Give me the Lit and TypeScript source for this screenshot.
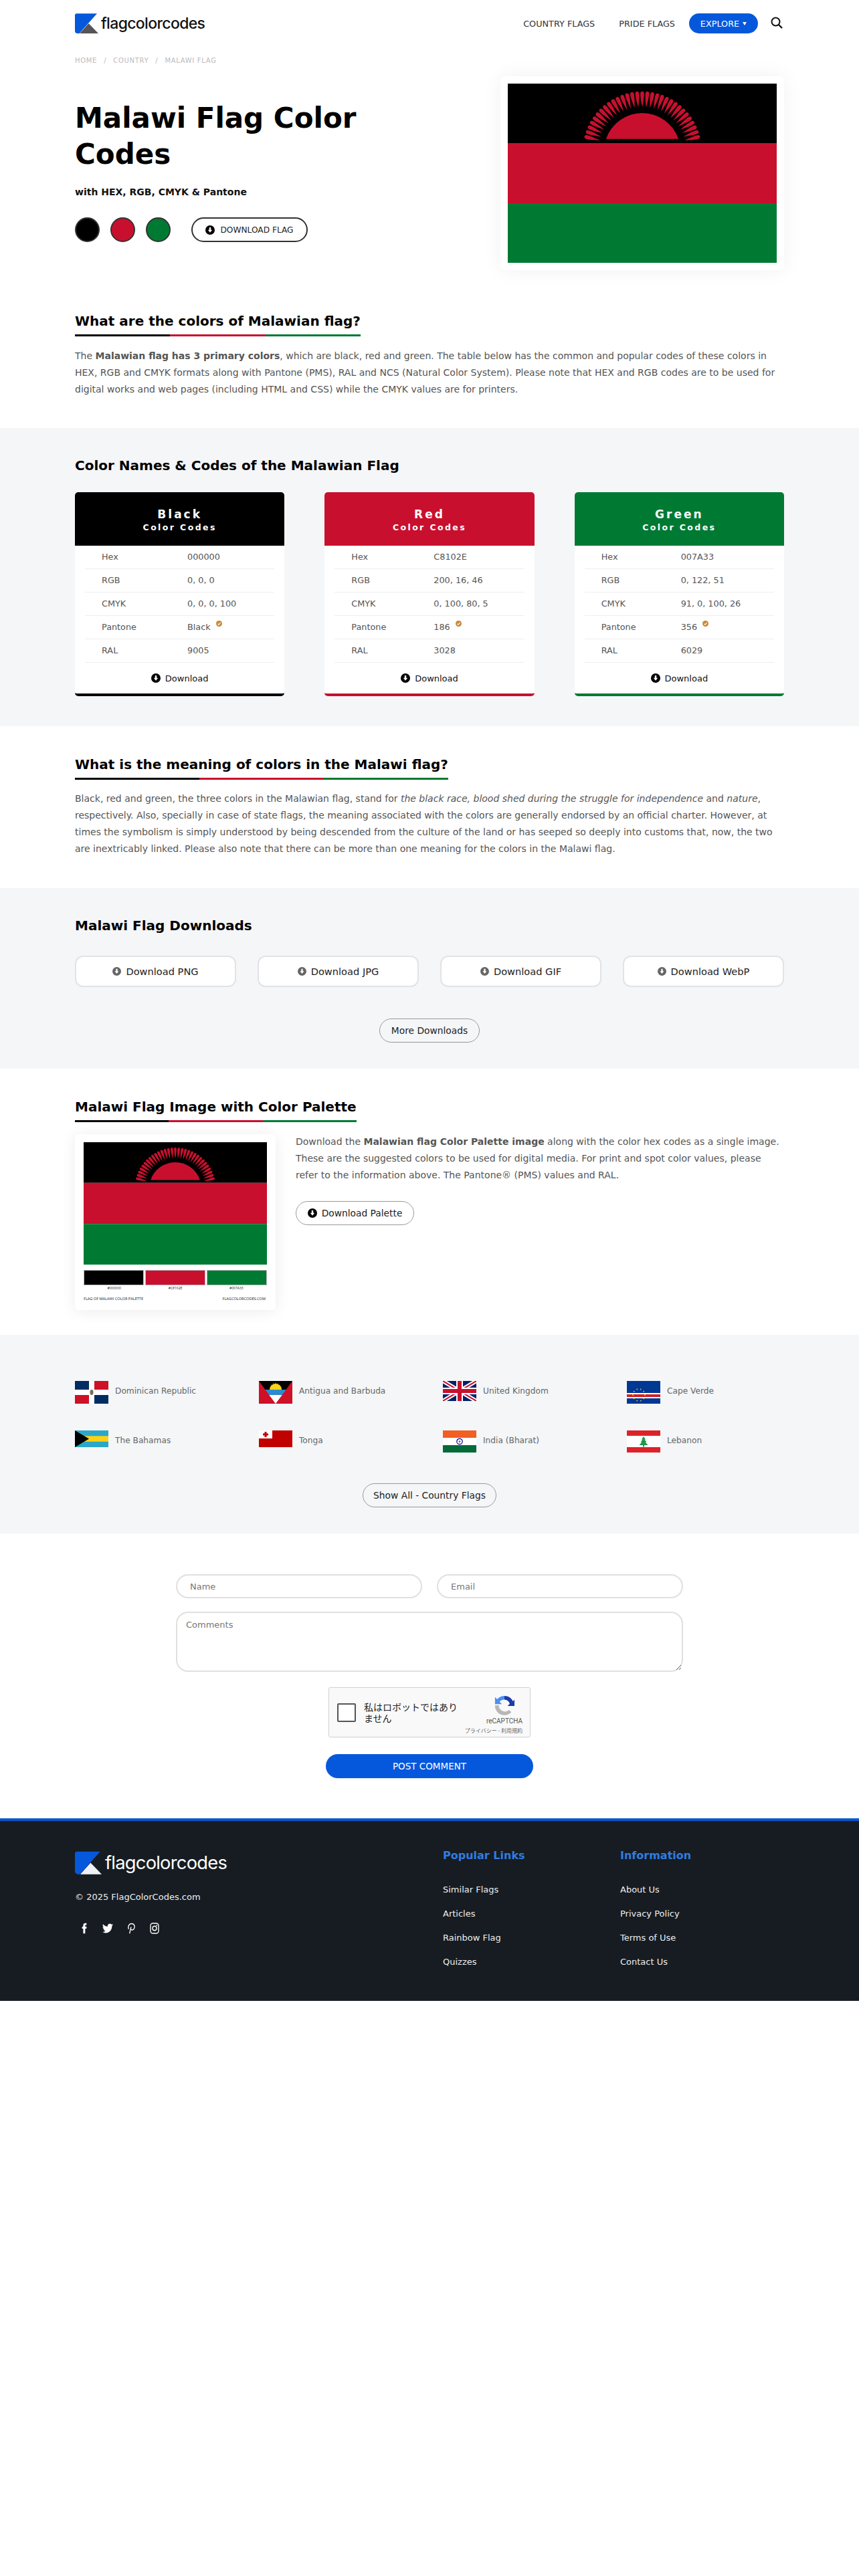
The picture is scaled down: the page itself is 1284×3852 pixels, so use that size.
import { LitElement, html, svg, css } from 'lit';
import { customElement } from 'lit/decorators.js';

const BLACK = '#000000';
const RED = '#C8102E';
const GREEN = '#007A33';

const colors = [
  { name: 'Black', bg: BLACK, hex: '000000', rgb: '0, 0, 0', cmyk: '0, 0, 0, 100', pantone: 'Black', ral: '9005', col: 128 },
  { name: 'Red', bg: RED, hex: 'C8102E', rgb: '200, 16, 46', cmyk: '0, 100, 80, 5', pantone: '186', ral: '3028', col: 123 },
  { name: 'Green', bg: GREEN, hex: '007A33', rgb: '0, 122, 51', cmyk: '91, 0, 100, 26', pantone: '356', ral: '6029', col: 119 },
];

// 31 rays around the rising sun
const rays = Array.from({ length: 31 }, (_, i) => 14 + i * (152 / 30));

const malawiFlag = (cls: string) => html`
  <svg class=${cls} viewBox="0 0 402 268" preserveAspectRatio="none">
    <rect width="402" height="89" fill="#000" />
    <rect y="89" width="402" height="90" fill=${RED} />
    <rect y="179" width="402" height="89" fill=${GREEN} />
    <path d="M147 82.7A57 57 0 0 1 255 82.7Z" fill=${RED} />
    ${rays.map(
      (a) => svg`<path transform="translate(201 100.6) rotate(${a - 90})"
        d="M0-65C-1.2-72-3.2-81-2.8-86.5A2.9 3.6 0 0 1 2.8-86.5C3.2-81 1.2-72 0-65Z" fill=${RED} />`,
    )}
  </svg>
`;

const downIcon = (cls = 'dl') => html`
  <svg class=${cls} viewBox="0 0 16 16">
    <circle cx="8" cy="8" r="8" fill="currentColor" />
    <path d="M6.6 3.5h2.8v4.3h2.3L8 12.4 4.3 7.8h2.3z" fill="#fff" />
  </svg>
`;

const logo = (tri: string) => html`
  <svg viewBox="0 0 35 30">
    <path d="M2.5.3H33L6.5 30H4a4 4 0 0 1-4-4V2.8A2.5 2.5 0 0 1 2.5.3z" fill="#0558dc" />
    <path d="M7 30L20.5 15 35 30z" fill=${tri} />
  </svg>
`;

const flags = [
  {
    name: 'Dominican Republic',
    h: 34,
    art: svg`<rect width="50" height="34" fill="#fff" />
      <rect width="21" height="13" fill="#002d62" /><rect x="29" width="21" height="13" fill="#ce1126" />
      <rect y="21" width="21" height="13" fill="#ce1126" /><rect x="29" y="21" width="21" height="13" fill="#002d62" />
      <ellipse cx="25" cy="17" rx="2.5" ry="4" fill="#7d6a58" />`,
  },
  {
    name: 'Antigua and Barbuda',
    h: 34,
    art: svg`<rect width="50" height="34" fill="#ce1126" />
      <path d="M0 0H50L40.5 13H9.5z" fill="#000" />
      <path d="M16 13a9 9 0 0 1 18 0z" fill="#fcd116" />
      <path d="M25 2l1.2 5 2.6-4-.8 5 4-3-2.400 4.400 4.400-1.600-3 3.200H19l-2.900-3.200 4.300 1.600L18 5l4 3-.8-5 2.600 4z" fill="#fcd116" />
      <path d="M9.500 13H40.500L34.700 21H15.300z" fill="#2a8ccf" />
      <path d="M15.300 21H34.700L25 34z" fill="#fff" />`,
  },
  {
    name: 'United Kingdom',
    h: 30,
    art: svg`<rect width="50" height="30" fill="#012169" />
      <path d="M0 0L50 30M50 0L0 30" stroke="#fff" stroke-width="6" />
      <path d="M0 0L50 30M50 0L0 30" stroke="#c8102e" stroke-width="2" />
      <path d="M25 0V30M0 15H50" stroke="#fff" stroke-width="10" />
      <path d="M25 0V30M0 15H50" stroke="#c8102e" stroke-width="6" />`,
  },
  {
    name: 'Cape Verde',
    h: 34,
    art: svg`<rect width="50" height="34" fill="#003893" />
      <rect y="18" width="50" height="8" fill="#fff" /><rect y="20" width="50" height="4" fill="#cf2027" />
      ${[0, 36, 72, 108, 144, 180, 216, 252, 288, 324].map(
        (a) => svg`<circle cx=${18 + 9 * Math.cos((a * Math.PI) / 180)} cy=${21 + 9 * Math.sin((a * Math.PI) / 180)} r="0.9" fill="#f7d116" />`,
      )}`,
  },
  {
    name: 'The Bahamas',
    h: 25,
    art: svg`<rect width="50" height="25" fill="#2ba8c8" /><rect y="8.300" width="50" height="8.400" fill="#fcd116" />
      <path d="M0 0L21 12.500 0 25z" fill="#000" />`,
  },
  {
    name: 'Tonga',
    h: 25,
    art: svg`<rect width="50" height="25" fill="#c10000" /><rect width="20" height="12" fill="#fff" />
      <path d="M8.500 2h3v2.500H14v3h-2.500V10h-3V7.500H6v-3h2.500z" fill="#c10000" />`,
  },
  {
    name: 'India (Bharat)',
    h: 33,
    art: svg`<rect width="50" height="33" fill="#fff" /><rect width="50" height="11" fill="#f15f22" />
      <rect y="22" width="50" height="11" fill="#046a38" />
      <circle cx="25" cy="16.500" r="4.200" fill="none" stroke="#06038d" stroke-width="1.200" />
      <circle cx="25" cy="16.500" r="1.500" fill="#6a69b5" />`,
  },
  {
    name: 'Lebanon',
    h: 33,
    art: svg`<rect width="50" height="33" fill="#dd2329" /><rect y="8" width="50" height="17" fill="#fff" />
      <path d="M25 9l3 4.500h-1.500l3 4h-1.800l3.800 4.500H26v2.500h-2V22h-5.500l3.800-4.500h-1.800l3-4H22z" fill="#1d9a4a" />`,
  },
];

const socialIcons = [
  svg`<path d="M14 8.500V6.300c0-1 .3-1.500 1.600-1.500H17V1h-2.800C11 1 9.600 3 9.600 5.800v2.700H7v4.100h2.600V23H14V12.600h2.800l.4-4.100z" fill="#fff" />`,
  svg`<path d="M23.953 4.570a10 10 0 01-2.825.775 4.958 4.958 0 002.163-2.723c-.951.555-2.005.959-3.127 1.184a4.920 4.920 0 00-8.384 4.482C7.690 8.095 4.067 6.130 1.640 3.162a4.822 4.822 0 00-.666 2.475c0 1.710.870 3.213 2.188 4.096a4.904 4.904 0 01-2.228-.616v.060a4.923 4.923 0 003.946 4.827 4.996 4.996 0 01-2.212.085 4.936 4.936 0 004.604 3.417 9.867 9.867 0 01-6.102 2.105c-.390 0-.779-.023-1.170-.067a13.995 13.995 0 007.557 2.209c9.053 0 13.998-7.496 13.998-13.985 0-.210 0-.420-.015-.630A9.935 9.935 0 0024 4.590z" fill="#fff" />`,
  svg`<path d="M8.500 23L12 9M6.500 14C4 8.500 7.500 2 13 2c5 0 7.500 4 6.500 8.500-1 4.500-5.500 6.500-8 3.500" fill="none" stroke="#fff" stroke-width="2" />`,
  svg`<rect x="3" y="1.500" width="18" height="21" rx="5" fill="none" stroke="#fff" stroke-width="2" />
    <circle cx="12" cy="12" r="4.500" fill="none" stroke="#fff" stroke-width="2" /><circle cx="17" cy="6" r="1.300" fill="#fff" />`,
];

@customElement('app-root')
export class AppRoot extends LitElement {
  static styles = css`
    :host {
      display: block;
      background: #fff;
      min-height: 3852px;
      font-family: 'DejaVu Sans', sans-serif;
      color: #555;
    }
    * { box-sizing: border-box; }
    svg { display: block; flex: none; }
    .nav { display: flex; align-items: center; padding: 20px 114px 0 112px; height: 50px; }
    .brand { display: flex; align-items: center; gap: 4px; flex: 1; }
    .brand svg { width: 35px; height: 30px; }
    .brand span { font: 500 23px/30px Inter, sans-serif; letter-spacing: -0.65px; color: #111; }
    .nav a { font-size: 12.8px; color: #333; }
    .nav .pride { margin-left: 36px; }
    .explore {
      margin-left: 21px; width: 103px; height: 30px; border-radius: 15px; background: #0558dc;
      color: #fff; font-size: 12.8px; display: flex; align-items: center; justify-content: center; gap: 5px;
    }
    .caret { border-left: 3.5px solid transparent; border-right: 3.5px solid transparent; border-top: 5px solid #fff; }
    .search { width: 18px; height: 18px; margin-left: 19px; margin-top: -2px; }
    .crumbs {
      margin: 33px 112px 0; font-size: 10px; line-height: 16px; letter-spacing: 0.7px; color: #bbb;
      display: flex; gap: 10px;
    }
    .hero { display: flex; justify-content: space-between; padding: 15px 112px 0; }
    .hero-text { padding-top: 36px; }
    h1 { margin: 0; font-size: 42px; line-height: 54px; font-weight: 700; color: #000; width: 480px; }
    .sub { margin-top: 19px; font-size: 14px; line-height: 20px; font-weight: 700; color: #111; }
    .actions { display: flex; align-items: center; margin-top: 28px; gap: 16px; }
    .dot { width: 37px; height: 37px; border-radius: 50%; border: 2px solid #333; }
    .dl-flag {
      margin-left: 15px; height: 37px; width: 174px; border: 2px solid #333; border-radius: 19px; background: #fff;
      display: flex; align-items: center; justify-content: center; gap: 8px; font-size: 12.2px; color: #222;
    }
    .flag-card {
      width: 424px; height: 290px; padding: 11px; background: #fff; border-radius: 6px;
      box-shadow: 0 0 30px rgba(0, 0, 0, 0.06);
    }
    .flag-big { width: 402px; height: 268px; }
    .dl { width: 14px; height: 14px; color: #000; }
    .sec { padding: 42px 112px 46px; }
    .sec.first { padding-top: 61px; padding-bottom: 45px; }
    .grey { background: #f4f6f8; padding: 41px 112px 45px; }
    h2 { margin: 0; font-size: 20px; line-height: 30px; font-weight: 700; color: #000; }
    .uh { display: inline-block; }
    .tri {
      height: 3px; margin-top: 5px;
      background: linear-gradient(90deg, #000 33.33%, #c8102e 33.33% 66.66%, #007a33 66.66%);
    }
    p { margin: 16.5px 0 0; font-size: 14px; line-height: 25px; color: #555; }
    p b { font-weight: 700; }
    .cards { display: grid; grid-template-columns: repeat(3, 1fr); gap: 60px; margin-top: 25px; }
    .card { background: #fff; border-radius: 5px; border-bottom: 4px solid; height: 305px; }
    .card-head {
      height: 80px; border-radius: 5px 5px 0 0; color: #fff; text-align: center; font-weight: 700; padding-top: 22px;
    }
    .card-head .nm { font-size: 17px; line-height: 22px; letter-spacing: 3px; }
    .card-head .cc { font-size: 12.5px; line-height: 18px; letter-spacing: 2.4px; }
    .rows { padding: 0 15px; }
    .row {
      display: grid; height: 35px; align-items: center; padding-left: 25px; font-size: 12.8px;
      border-bottom: 1.5px solid #eee; color: #555;
    }
    .val { display: flex; }
    .tick { width: 9px; height: 9px; margin: -2px 0 0 8px; }
    .card-dl { height: 46px; display: flex; align-items: center; justify-content: center; gap: 7px; font-size: 13px; color: #111; padding-top: 1px; }
    .dl-grid { display: grid; grid-template-columns: repeat(4, 1fr); gap: 32px; margin-top: 30px; }
    .dl-btn {
      height: 47px; background: #fff; border: 2px solid #e1e3e6; border-radius: 12px; display: flex;
      align-items: center; justify-content: center; gap: 7px; font-size: 14.6px; color: #222;
    }
    .dl-btn .dl { color: #666; width: 13px; height: 13px; }
    .center { display: flex; justify-content: center; }
    .pill {
      height: 36px; border: 1.5px solid #999; border-radius: 18px; display: inline-flex; align-items: center;
      justify-content: center; gap: 7px; font-size: 13.8px; color: #222;
    }
    .more { width: 150px; margin-top: 47px; }
    .grey.dls { padding-bottom: 39px; }
    .palette { display: flex; gap: 30px; margin-top: 18px; }
    .pal-card {
      width: 300px; height: 263px; flex: none; padding: 12px 13px; background: #fff; border-radius: 6px;
      box-shadow: 0 2px 22px rgba(0, 0, 0, 0.08);
    }
    .flag-small { width: 274px; height: 183px; }
    .swatches { display: grid; grid-template-columns: repeat(3, 1fr); gap: 2px; margin-top: 8px; }
    .swatch { height: 23px; border: 1px solid #bbb; }
    .hexes { display: grid; grid-template-columns: repeat(3, 1fr); font: 5px/8px 'Open Sans', sans-serif; color: #222; text-align: center; }
    .pal-foot { display: flex; justify-content: space-between; font: 5.6px/8px 'Open Sans', sans-serif; color: #222; margin-top: 8px; padding-right: 2px; }
    .pal-text p { margin-top: -1.5px; }
    .dl-pal { width: 177px; margin-top: 26px; }
    .sec.pal { padding-bottom: 37px; }
    .grey.others { padding: 69px 112px 39px; }
    .flag-grid { display: grid; grid-template-columns: repeat(4, 275px); row-gap: 40px; align-items: start; }
    .flag-item { display: flex; gap: 10px; font-size: 12.2px; line-height: 18px; color: #666; }
    .flag-item svg { width: 50px; }
    .flag-item span { padding-top: 6px; }
    .show { width: 200px; margin-top: 46px; }
    form { width: 758px; margin: 0 auto; padding: 61px 0 60px; display: flex; flex-direction: column; align-items: center; }
    .two { display: grid; grid-template-columns: 1fr 1fr; gap: 22px; width: 100%; }
    input, textarea {
      font: 13px 'DejaVu Sans', sans-serif; border: 2px solid #e0e0e0; background: #fff; width: 100%; outline: none; display: block;
    }
    input { height: 36px; border-radius: 18px; padding: 0 19px; }
    textarea { height: 90px; border-radius: 18px; padding: 10px 13px; margin-top: 20px; resize: vertical; }
    ::placeholder { color: #777; opacity: 1; }
    .captcha {
      width: 302px; height: 75px; margin-top: 23px; background: #f9f9f9; border: 1px solid #d3d3d3; border-radius: 3px;
      display: flex; align-items: center; padding-left: 12px; position: relative;
      box-shadow: 0 0 3px rgba(0, 0, 0, 0.06);
    }
    .cbx { width: 28px; height: 28px; background: #fff; border: 2px solid #555; border-radius: 2px; }
    .cap-text { margin-left: 12px; width: 150px; font: 14px/17px 'Noto Sans CJK JP', sans-serif; color: #222; }
    .cap-logo { position: absolute; right: 0; top: 0; width: 100px; height: 73px; display: flex; flex-direction: column; align-items: flex-end; padding-right: 11px; font-family: Roboto, sans-serif; color: #666; }
    .cap-logo svg { width: 30px; height: 30px; margin: 11px 12px 0 0; }
    .cap-logo .rc { font-size: 10px; line-height: 12px; margin-top: 3px; color: #555; }
    .cap-logo .pv { font: 8px/12px 'Noto Sans CJK JP', sans-serif; margin-top: 2px; white-space: nowrap; }
    .post {
      width: 310px; height: 36px; margin-top: 25px; border-radius: 18px; background: #0558dc; color: #fff;
      font-size: 13.5px; display: flex; align-items: center; justify-content: center;
    }
    footer { height: 273px; border-top: 4px solid #0a57cc; background: #161c22; padding: 42px 112px 0; display: flex; color: #fff; }
    .f-left { width: 550px; flex: none; padding-top: 3px; }
    .f-brand { display: flex; align-items: center; gap: 5px; height: 35px; }
    .f-brand svg { width: 40px; height: 35px; }
    .f-brand span { font: 400 27.3px/35px Inter, sans-serif; letter-spacing: -0.75px; color: #fff; }
    .copy { font-size: 13px; line-height: 18px; margin-top: 25px; color: #eee; }
    .social { display: flex; gap: 19px; margin: 29px 0 0 6px; }
    .social svg { width: 16px; height: 17px; }
    .f-col { width: 265px; flex: none; }
    .f-col h3 { margin: 0; font-size: 16px; line-height: 20px; font-weight: 700; color: #2f7de1; }
    .f-col ul { list-style: none; margin: 32px 0 0; padding: 0; display: flex; flex-direction: column; gap: 18px; }
    .f-col li { font-size: 13px; line-height: 18px; color: #eee; }
  `;

  render() {
    return html`
      <div class="nav">
        <div class="brand">${logo('#555')}<span>flagcolorcodes</span></div>
        <a>COUNTRY FLAGS</a>
        <a class="pride">PRIDE FLAGS</a>
        <div class="explore">EXPLORE <i class="caret"></i></div>
        <svg class="search" viewBox="0 0 18 18">
          <circle cx="7.5" cy="7.5" r="6" fill="none" stroke="#111" stroke-width="2" />
          <path d="M12 12l5 5" stroke="#111" stroke-width="2.4" />
        </svg>
      </div>
      <div class="crumbs"><span>HOME</span><span>/</span><span>COUNTRY</span><span>/</span><span>MALAWI FLAG</span></div>

      <div class="hero">
        <div class="hero-text">
          <h1>Malawi Flag Color Codes</h1>
          <div class="sub">with HEX, RGB, CMYK &amp; Pantone</div>
          <div class="actions">
            ${colors.map((c) => html`<div class="dot" style="background:${c.bg}"></div>`)}
            <div class="dl-flag">${downIcon()} DOWNLOAD FLAG</div>
          </div>
        </div>
        <div class="flag-card">${malawiFlag('flag-big')}</div>
      </div>

      <section class="sec first">
        <div class="uh"><h2>What are the colors of Malawian flag?</h2><div class="tri"></div></div>
        <p>
          The <b>Malawian flag has 3 primary colors</b>, which are black, red and green. The table below has the common
          and popular codes of these colors in HEX, RGB and CMYK formats along with Pantone (PMS), RAL and NCS (Natural
          Color System). Please note that HEX and RGB codes are to be used for digital works and web pages (including
          HTML and CSS) while the CMYK values are for printers.
        </p>
      </section>

      <section class="grey">
        <h2>Color Names &amp; Codes of the Malawian Flag</h2>
        <div class="cards">
          ${colors.map(
            (c) => html`
              <div class="card" style="border-color:${c.bg}">
                <div class="card-head" style="background:${c.bg}">
                  <div class="nm">${c.name}</div>
                  <div class="cc">Color Codes</div>
                </div>
                <div class="rows">
                  ${[
                    ['Hex', c.hex],
                    ['RGB', c.rgb],
                    ['CMYK', c.cmyk],
                    ['Pantone', c.pantone],
                    ['RAL', c.ral],
                  ].map(
                    ([k, v]) => html`
                      <div class="row" style="grid-template-columns:${c.col}px 1fr">
                        <span>${k}</span>
                        <span class="val">${v}${k === 'Pantone'
                          ? html`<svg class="tick" viewBox="0 0 10 10">
                              <circle cx="5" cy="5" r="5" fill="#c98a36" />
                              <path d="M2.8 5.2l1.6 1.6 3-3.4" fill="none" stroke="#fff" stroke-width="1.2" />
                            </svg>`
                          : ''}</span>
                      </div>
                    `,
                  )}
                </div>
                <div class="card-dl">${downIcon()} Download</div>
              </div>
            `,
          )}
        </div>
      </section>

      <section class="sec">
        <div class="uh"><h2>What is the meaning of colors in the Malawi flag?</h2><div class="tri"></div></div>
        <p>
          Black, red and green, the three colors in the Malawian flag, stand for
          <i>the black race, blood shed during the struggle for independence</i> and <i>nature</i>, respectively. Also,
          specially in case of state flags, the meaning associated with the colors are generally endorsed by an official
          charter. However, at times the symbolism is simply understood by being descended from the culture of the land
          or has seeped so deeply into customs that, now, the two are inextricably linked. Please also note that there
          can be more than one meaning for the colors in the Malawi flag.
        </p>
      </section>

      <section class="grey dls">
        <h2>Malawi Flag Downloads</h2>
        <div class="dl-grid">
          ${['PNG', 'JPG', 'GIF', 'WebP'].map((t) => html`<div class="dl-btn">${downIcon()} Download ${t}</div>`)}
        </div>
        <div class="center"><div class="pill more">More Downloads</div></div>
      </section>

      <section class="sec pal">
        <div class="uh"><h2>Malawi Flag Image with Color Palette</h2><div class="tri"></div></div>
        <div class="palette">
          <div class="pal-card">
            ${malawiFlag('flag-small')}
            <div class="swatches">
              ${colors.map((c) => html`<div class="swatch" style="background:${c.bg}"></div>`)}
            </div>
            <div class="hexes">${colors.map((c) => html`<span>#${c.hex}</span>`)}</div>
            <div class="pal-foot"><span>FLAG OF MALAWI COLOR PALETTE</span><span>FLAGCOLORCODES.COM</span></div>
          </div>
          <div class="pal-text">
            <p>
              Download the <b>Malawian flag Color Palette image</b> along with the color hex codes as a single image.
              These are the suggested colors to be used for digital media. For print and spot color values, please refer
              to the information above. The Pantone® (PMS) values and RAL.
            </p>
            <div class="pill dl-pal">${downIcon()} Download Palette</div>
          </div>
        </div>
      </section>

      <section class="grey others">
        <div class="flag-grid">
          ${flags.map(
            (f) => html`
              <div class="flag-item">
                <svg viewBox="0 0 50 ${f.h}" style="height:${f.h}px">${f.art}</svg>
                <span>${f.name}</span>
              </div>
            `,
          )}
        </div>
        <div class="center"><div class="pill show">Show All - Country Flags</div></div>
      </section>

      <form>
        <div class="two">
          <input placeholder="Name" />
          <input placeholder="Email" />
        </div>
        <textarea placeholder="Comments"></textarea>
        <div class="captcha">
          <div class="cbx"></div>
          <div class="cap-text">私はロボットではありません</div>
          <div class="cap-logo">
            <svg viewBox="0 0 32 32">
              <path d="M16 1A15 15 0 0 0 4.5 6.400L1 3v11h11L8.300 10.300A10 10 0 0 1 16 7z" fill="#4a90f0" />
              <path d="M16 1A15 15 0 0 1 29.500 9.500L32 7v10H21l3.500-3.500A10 10 0 0 0 16 7z" fill="#1c3aa9" />
              <path d="M1 16H7A10 10 0 0 0 23.500 23.500L27 27A15 15 0 0 1 1 16z" fill="#b7b7b7" />
            </svg>
            <div class="rc">reCAPTCHA</div>
            <div class="pv">プライバシー - 利用規約</div>
          </div>
        </div>
        <div class="post">POST COMMENT</div>
      </form>

      <footer>
        <div class="f-left">
          <div class="f-brand">${logo('#eef1f5')}<span>flagcolorcodes</span></div>
          <div class="copy">© 2025 FlagColorCodes.com</div>
          <div class="social">${socialIcons.map((s) => html`<svg viewBox="0 0 24 24" preserveAspectRatio="none">${s}</svg>`)}</div>
        </div>
        <div class="f-col">
          <h3>Popular Links</h3>
          <ul>
            <li>Similar Flags</li>
            <li>Articles</li>
            <li>Rainbow Flag</li>
            <li>Quizzes</li>
          </ul>
        </div>
        <div class="f-col">
          <h3>Information</h3>
          <ul>
            <li>About Us</li>
            <li>Privacy Policy</li>
            <li>Terms of Use</li>
            <li>Contact Us</li>
          </ul>
        </div>
      </footer>
    `;
  }
}
